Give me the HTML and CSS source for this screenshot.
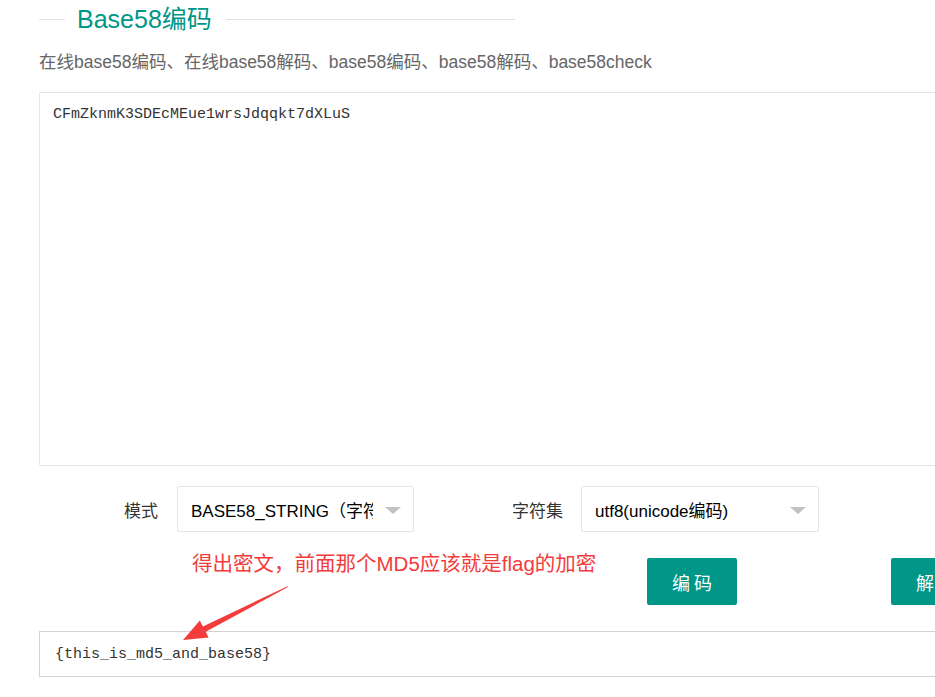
FILE: index.html
```html
<!DOCTYPE html>
<html lang="zh">
<head>
<meta charset="utf-8">
<title>Base58编码</title>
<link rel="stylesheet" href="styles.css">
</head>
<body>
<div class="page">
  <div class="legend">
    <span class="legend-line short"></span>
    <h1 class="legend-title">Base58编码</h1>
    <span class="legend-line long"></span>
  </div>
  <p class="subtitle">在线base58编码、在线base58解码、base58编码、base58解码、base58check</p>
  <div class="input-box">CFmZknmK3SDEcMEue1wrsJdqqkt7dXLuS</div>
  <div class="form-row">
    <label class="label label-mode">模式</label>
    <div class="select select-mode"><span class="select-text">BASE58_STRING（字符串）</span><span class="caret"></span></div>
    <label class="label label-charset">字符集</label>
    <div class="select select-charset"><span class="select-text">utf8(unicode编码)</span><span class="caret"></span></div>
  </div>
  <div class="btn-row">
    <button class="btn btn-encode">编 码</button>
    <button class="btn btn-decode">解 码</button>
  </div>
  <div class="output-box">{this_is_md5_and_base58}</div>
  <div class="note">得出密文，前面那个MD5应该就是flag的加密</div>
  <svg class="arrow" width="106" height="60" viewBox="0 0 106 60">
    <polygon points="104.5,2.2 105,3 22.7,47.8 25.6,53.6 0,56 16.8,36.6 19.9,42.4" fill="#f33c3c"/>
  </svg>
</div>
</body>
</html>
```
FILE: styles.css
```css
html, body {
  margin: 0;
  padding: 0;
  background: #fff;
  overflow: hidden;
}
body {
  font-family: "Liberation Sans", "Noto Sans CJK SC", sans-serif;
  color: #333;
}
.page {
  position: relative;
  width: 935px;
  height: 697px;
  padding-left: 39px;
  box-sizing: border-box;
}
.legend {
  display: flex;
  align-items: center;
  height: 38px;
  width: 476px;
}
.legend-line {
  height: 1px;
  background: #e2e2e2;
}
.legend-line.short {
  width: 26px;
  margin-right: 12px;
}
.legend-line.long {
  flex: 1;
  margin-left: 14px;
}
.legend-title {
  margin: 0;
  font-size: 25px;
  font-weight: normal;
  color: #009688;
  line-height: 38px;
}
.subtitle {
  margin: 12px 0 0;
  font-size: 17.5px;
  line-height: 24px;
  color: #666;
  white-space: nowrap;
}
.input-box {
  margin-top: 18px;
  height: 374px;
  width: 920px;
  box-sizing: border-box;
  border: 1px solid #e6e6e6;
  border-radius: 2px;
  padding: 12px 13px 10px;
  font-family: "Liberation Mono", monospace;
  font-size: 15px;
  line-height: 20px;
  color: #333;
}
.form-row {
  display: flex;
  align-items: center;
  margin-top: 20px;
  height: 46px;
}
.label {
  font-size: 17px;
  text-align: right;
  color: #333;
}
.label-mode { width: 119px; margin-right: 19px; }
.label-charset { width: 149px; margin-right: 18px; }
.select {
  position: relative;
  display: flex;
  align-items: center;
  height: 46px;
  box-sizing: border-box;
  border: 1px solid #e6e6e6;
  border-radius: 2px;
  padding-left: 13px;
  padding-right: 40px;
  font-size: 17px;
  color: #000;
  overflow: hidden;
  white-space: nowrap;
}
.select-mode { width: 237px; }
.select-charset { width: 238px; }
.select-text {
  overflow: hidden;
}
.caret {
  position: absolute;
  right: 12px;
  top: 20px;
  width: 0;
  height: 0;
  border-left: 8px solid transparent;
  border-right: 8px solid transparent;
  border-top: 7px solid #c2c2c2;
}
.btn-row {
  display: flex;
  margin-top: 26px;
  padding-left: 608px;
  gap: 154px;
  height: 47px;
}
.btn {
  flex: none;
  width: 90px;
  height: 47px;
  border: none;
  border-radius: 2px;
  background: #009688;
  color: #fff;
  font-family: "Noto Sans CJK SC", sans-serif;
  font-size: 18px;
  padding: 0;
}
.output-box {
  margin-top: 26px;
  height: 46px;
  width: 920px;
  box-sizing: border-box;
  border: 1px solid #d2d2d2;
  padding: 0 15px;
  display: flex;
  align-items: center;
  font-family: "Liberation Mono", monospace;
  font-size: 15px;
  color: #333;
}
.note {
  position: absolute;
  left: 192px;
  top: 549px;
  font-size: 20.5px;
  line-height: 30px;
  color: #f23c3c;
  white-space: nowrap;
}
.arrow {
  position: absolute;
  left: 183px;
  top: 584px;
}
```
